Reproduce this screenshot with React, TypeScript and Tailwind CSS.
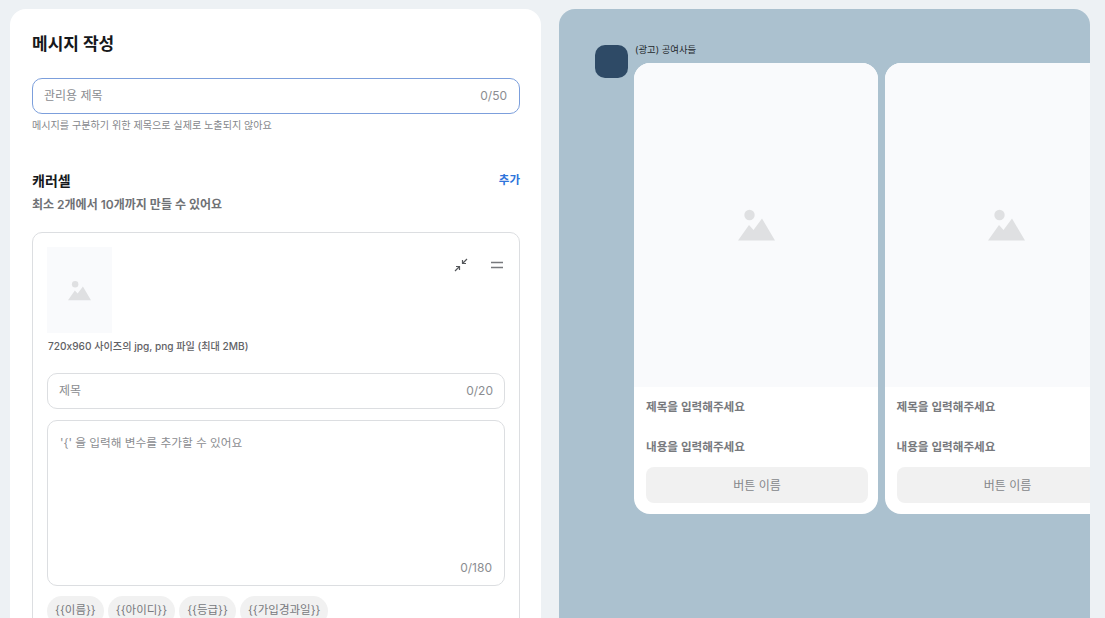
const font = "font-['Inter','Noto_Sans_CJK_KR',sans-serif]";

function Mountain({ className }: { className: string }) {
  return (
    <svg viewBox="0 0 37 32" className={className} fill="#dfe0e2">
      <circle cx="11.5" cy="6" r="5.2" />
      <path d="M0 31.5 L11 16 L15.5 21 L24 9.5 L37 31.5 Z" />
    </svg>
  );
}

function Field({ label, count }: { label: string; count: string }) {
  return (
    <div className="flex h-9 items-center justify-between rounded-[10px] border border-[#dcdee1] bg-white pl-[11px] pr-[11px] text-[12px] text-[#8b8d91]">
      <span>{label}</span>
      <span>{count}</span>
    </div>
  );
}

function PreviewCard() {
  return (
    <div className="flex h-[451px] w-[244px] shrink-0 flex-col overflow-hidden rounded-2xl bg-white">
      <div className="flex h-[324px] shrink-0 items-center justify-center bg-[#f9fafc]">
        <Mountain className="h-8 w-[37px]" />
      </div>
      <div className="flex flex-1 flex-col px-3 text-[11.6px] font-semibold text-[#77797d]">
        <div className="mt-3 h-4 leading-4">제목을 입력해주세요</div>
        <div className="mt-6 h-4 leading-4">내용을 입력해주세요</div>
        <div className="mt-3 flex h-9 w-[222px] items-center justify-center rounded-lg bg-[#f1f1f1] pt-[2px] text-[12px] font-normal text-[#85878a]">
          버튼 이름
        </div>
      </div>
    </div>
  );
}

export default function App() {
  return (
    <div className={`${font} flex h-[618px] w-[1105px] gap-[18px] overflow-hidden bg-[#edf1f4] pl-[10px] pt-[9px]`}>
      <div className="h-[700px] w-[531px] shrink-0 rounded-2xl bg-white pl-[22px] pr-[21px] pt-[23px]">
        <h1 className="h-6 text-[17px] font-bold leading-6 text-[#16181b]">메시지 작성</h1>
        <div className="mt-[22px] flex h-9 items-center justify-between rounded-[10px] border border-[#7c9fdc] bg-white pl-[11px] pr-3 text-[12px] text-[#8b8d91]">
          <span>관리용 제목</span>
          <span>0/50</span>
        </div>
        <p className="mt-[3px] h-4 text-[10.1px] leading-4 text-[#85878b]">메시지를 구분하기 위한 제목으로 실제로 노출되지 않아요</p>

        <div className="mt-[38px] flex h-5 items-center justify-between">
          <span className="-mt-[2px] text-[14px] font-bold text-[#16181b]">캐러셀</span>
          <span className="text-[11.5px] font-semibold text-[#2f74db]">추가</span>
        </div>
        <p className="mt-[5px] h-[18px] text-[12px] font-semibold leading-[18px] text-[#6f7175]">최소 2개에서 10개까지 만들 수 있어요</p>

        <div className="mt-[18px] h-[500px] rounded-[10px] border border-[#dcdee1] pl-[14px] pr-[15px] pt-[14px]">
          <div className="flex items-start justify-between">
            <div className="flex h-[86px] w-[65px] items-center justify-center bg-[#f9fafc]">
              <Mountain className="h-[21px] w-[23px]" />
            </div>
            <div className="mt-[11px] flex items-center gap-[22px]">
              <svg viewBox="0 0 14 14" className="h-[14px] w-[14px]" fill="none" stroke="#55575b" strokeWidth="1.2">
                <path d="M13 1 L8.5 5.5 M8.5 2 V5.5 H12 M1 13 L5.5 8.5 M2 8.5 H5.5 V12" />
              </svg>
              <svg viewBox="0 0 14 8" className="h-2 w-[14px]" fill="none" stroke="#77797d" strokeWidth="1.3">
                <path d="M1 1.5 H13 M1 6.5 H13" />
              </svg>
            </div>
          </div>
          <p className="ml-px mt-[5px] h-4 text-[10.15px] font-medium leading-4 text-[#5f6165] [font-feature-settings:'calt'_0]">720x960 사이즈의 jpg, png 파일 (최대 2MB)</p>
          <div className="-mr-px mt-[19px]">
            <Field label="제목" count="0/20" />
          </div>
          <div className="-mr-px mt-[11px] flex h-[166px] flex-col justify-between rounded-[10px] border border-[#dcdee1] bg-white px-3 pb-2 pt-[14px] text-[11.7px] text-[#8b8d91]">
            <span>'&#123;' 을 입력해 변수를 추가할 수 있어요</span>
            <span className="self-end text-[12px]">0/180</span>
          </div>
          <div className="mt-[10px] flex gap-1 text-[11.5px] text-[#77797d]">
            {["{{이름}}", "{{아이디}}", "{{등급}}", "{{가입경과일}}"].map((t) => (
              <span key={t} className="flex h-[30px] items-center rounded-full bg-[#f1f1f1] px-2">{t}</span>
            ))}
          </div>
        </div>
      </div>

      <div className="h-[700px] w-[531px] shrink-0 overflow-hidden rounded-t-2xl bg-[#abc1cf] pl-9 pt-9">
        <div className="flex gap-[6px]">
          <div className="h-[33px] w-[33px] shrink-0 rounded-[10px] bg-[#2e4a66]" />
          <div className="min-w-0">
            <p className="-mt-[2px] ml-px h-5 text-[9.4px] leading-[14px] text-[#24282c]">(광고) 공여사들</p>
            <div className="flex gap-[6.5px]">
              <PreviewCard />
              <PreviewCard />
            </div>
          </div>
        </div>
      </div>
    </div>
  );
}
